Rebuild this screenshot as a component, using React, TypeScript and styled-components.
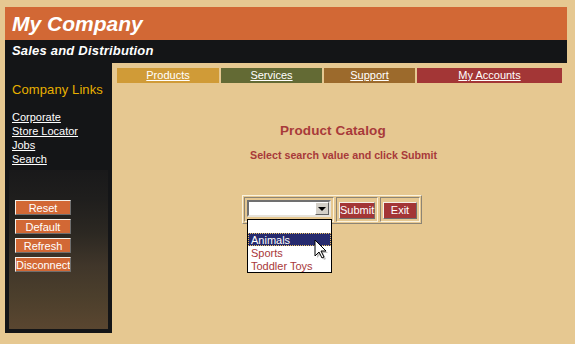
import React from 'react';
import styled, { createGlobalStyle } from 'styled-components';

const GlobalStyle = createGlobalStyle`
  body {
    margin: 0;
    background: #e6c891;
    font-family: "Liberation Sans", Arial, sans-serif;
  }
`;

const Page = styled.div`
  padding: 7px 0 0 5px;
`;

const Frame = styled.div`
  width: 562px;
`;

const Header = styled.div`
  height: 33px;
  background: #d26835;
  color: #fff;
  font-size: 21px;
  font-weight: bold;
  font-style: italic;
  line-height: 33px;
  padding-left: 7px;
`;

const SubHeader = styled.div`
  height: 23px;
  background: #141517;
  color: #fff;
  font-size: 13px;
  font-weight: bold;
  font-style: italic;
  letter-spacing: 0.2px;
  line-height: 22px;
  padding-left: 7px;
`;

const Body = styled.div`
  display: flex;
  height: 270px;
`;

const Sidebar = styled.div`
  width: 107px;
  box-sizing: border-box;
  background: #141517;
  padding: 0 4px 4px 4px;
  display: flex;
  flex-direction: column;
`;

const SideTitle = styled.div`
  margin: 19px 0 0 3px;
  color: #e8b000;
  font-size: 13px;
  line-height: 15px;
  letter-spacing: 0.1px;
`;

const LinkList = styled.div`
  margin: 13px 0 0 3px;
  display: flex;
  flex-direction: column;
`;

const SideLink = styled.a`
  color: #fff;
  font-size: 11px;
  line-height: 14px;
  text-decoration: underline;
`;

const PhotoPanel = styled.div`
  margin-top: 4px;
  flex: 1;
  background: linear-gradient(180deg, #19191a 0%, #1f1e1d 18%, #2c2822 40%, #40362a 60%, #4c3f2c 80%, #5a4630 100%);
  padding: 30px 0 0 6px;
  display: flex;
  flex-direction: column;
  gap: 4px;
`;

const SideButton = styled.button`
  width: 56px;
  height: 15px;
  box-sizing: border-box;
  padding: 0;
  background: #d26835;
  color: #fff;
  font-family: "Liberation Sans", Arial, sans-serif;
  font-size: 11px;
  line-height: 12px;
  border: 1px solid;
  border-color: #f4f0e8 #6e6e6e #6e6e6e #f4f0e8;
  white-space: nowrap;
  overflow: hidden;
`;

const Main = styled.div`
  flex: 1;
  background: #e6c891;
  display: flex;
  flex-direction: column;
`;

const Nav = styled.div`
  display: flex;
  gap: 2px;
  margin: 5px 5px 0 5px;
`;

const NavItem = styled.a<{ $bg: string; $w: number }>`
  width: ${p => p.$w}px;
  height: 15px;
  background: ${p => p.$bg};
  color: #fff;
  font-size: 11px;
  line-height: 15px;
  text-align: center;
  text-decoration: underline;
`;

const Title = styled.div`
  margin: 40px 0 0 168px;
  color: #a83a3a;
  font-size: 13.5px;
  font-weight: bold;
  line-height: 16px;
  letter-spacing: 0.1px;
`;

const Hint = styled.div`
  margin: 10px 0 0 138px;
  color: #a83a3a;
  font-size: 10.7px;
  font-weight: bold;
  line-height: 13px;
`;

const FormBox = styled.div`
  margin: 33px 0 0 130px;
  align-self: flex-start;
  display: flex;
  gap: 2px;
  padding: 1px;
  border: 1px solid;
  border-color: #fbf3de #8c8474 #8c8474 #fbf3de;
`;

const Cell = styled.div`
  padding: 2px;
  border: 1px solid;
  border-color: #8c8474 #fbf3de #fbf3de #8c8474;
  position: relative;
`;

const Select = styled.div`
  position: relative;
  width: 84px;
  height: 17px;
  box-sizing: border-box;
  background: #fff;
  border: 2px solid;
  border-color: #707070 #e8e4dc #e8e4dc #707070;
  display: flex;
  justify-content: flex-end;
`;

const ArrowButton = styled.div`
  width: 14px;
  height: 13px;
  box-sizing: border-box;
  background: #d4d0c8;
  border: 1px solid;
  border-color: #fff #606060 #606060 #fff;
  display: flex;
  align-items: center;
  justify-content: center;
`;

const Triangle = styled.div`
  width: 0;
  height: 0;
  border-left: 4px solid transparent;
  border-right: 4px solid transparent;
  border-top: 4px solid #000;
`;

const ActionButton = styled.button<{ $w: number }>`
  width: ${p => p.$w}px;
  height: 17px;
  box-sizing: border-box;
  padding: 0;
  background: #a33636;
  color: #fff;
  font-family: "Liberation Sans", Arial, sans-serif;
  font-size: 11px;
  border: 1px solid;
  border-color: #f4f0e8 #6e6e6e #6e6e6e #f4f0e8;
`;

const DropList = styled.div`
  position: absolute;
  left: 2px;
  top: 21px;
  width: 85px;
  box-sizing: border-box;
  background: #fff;
  border: 1px solid #000;
  padding: 0;
  z-index: 2;
`;

const Option = styled.div<{ $selected?: boolean }>`
  height: 13px;
  box-sizing: border-box;
  padding-left: 2px;
  font-size: 11px;
  line-height: 12px;
  color: ${p => (p.$selected ? '#fff' : '#a8383a')};
  background: ${p => (p.$selected ? '#262a6e' : 'transparent')};
  border: 1px ${p => (p.$selected ? 'dotted #e8c060' : 'solid transparent')};
  white-space: nowrap;
`;

const Cursor = styled.svg`
  position: absolute;
  left: 66px;
  top: 19px;
  pointer-events: none;
`;

const navItems = [
  { label: 'Products', bg: '#d09b37', w: 102 },
  { label: 'Services', bg: '#636a34', w: 101 },
  { label: 'Support', bg: '#9c6a2c', w: 91 },
  { label: 'My Accounts', bg: '#a33636', w: 145 },
];

const sideLinks = ['Corporate', 'Store Locator', 'Jobs', 'Search'];
const sideButtons = ['Reset', 'Default', 'Refresh', 'Disconnect'];

const App: React.FC = () => {
  return (
    <Page>
      <GlobalStyle />
      <Frame>
        <Header>My Company</Header>
        <SubHeader>Sales and Distribution</SubHeader>
        <Body>
          <Sidebar>
            <SideTitle>Company Links</SideTitle>
            <LinkList>
              {sideLinks.map(l => (
                <SideLink key={l}>{l}</SideLink>
              ))}
            </LinkList>
            <PhotoPanel>
              {sideButtons.map(b => (
                <SideButton key={b}>{b}</SideButton>
              ))}
            </PhotoPanel>
          </Sidebar>
          <Main>
            <Nav>
              {navItems.map(n => (
                <NavItem key={n.label} $bg={n.bg} $w={n.w}>{n.label}</NavItem>
              ))}
            </Nav>
            <Title>Product Catalog</Title>
            <Hint>Select search value and click Submit</Hint>
            <FormBox>
              <Cell>
                <Select>
                  <ArrowButton>
                    <Triangle />
                  </ArrowButton>
                </Select>
                <DropList>
                  <Option />
                  <Option $selected>Animals</Option>
                  <Option>Sports</Option>
                  <Option>Toddler Toys</Option>
                  <Cursor width="16" height="22" viewBox="0 0 16 22">
                    <path d="M3 3 L3 19 L7 15 L10 21 L12 20 L9 14 L14 14 Z" fill="rgba(0,0,0,0.25)" />
                    <path d="M1 1 L1 17 L5 13 L8 19 L10 18 L7 12 L12 12 Z" fill="#fff" stroke="#000" strokeWidth="1" strokeLinejoin="miter" />
                  </Cursor>
                </DropList>
              </Cell>
              <Cell>
                <ActionButton $w={36}>Submit</ActionButton>
              </Cell>
              <Cell>
                <ActionButton $w={34}>Exit</ActionButton>
              </Cell>
            </FormBox>
          </Main>
        </Body>
      </Frame>
    </Page>
  );
};

export default App;
